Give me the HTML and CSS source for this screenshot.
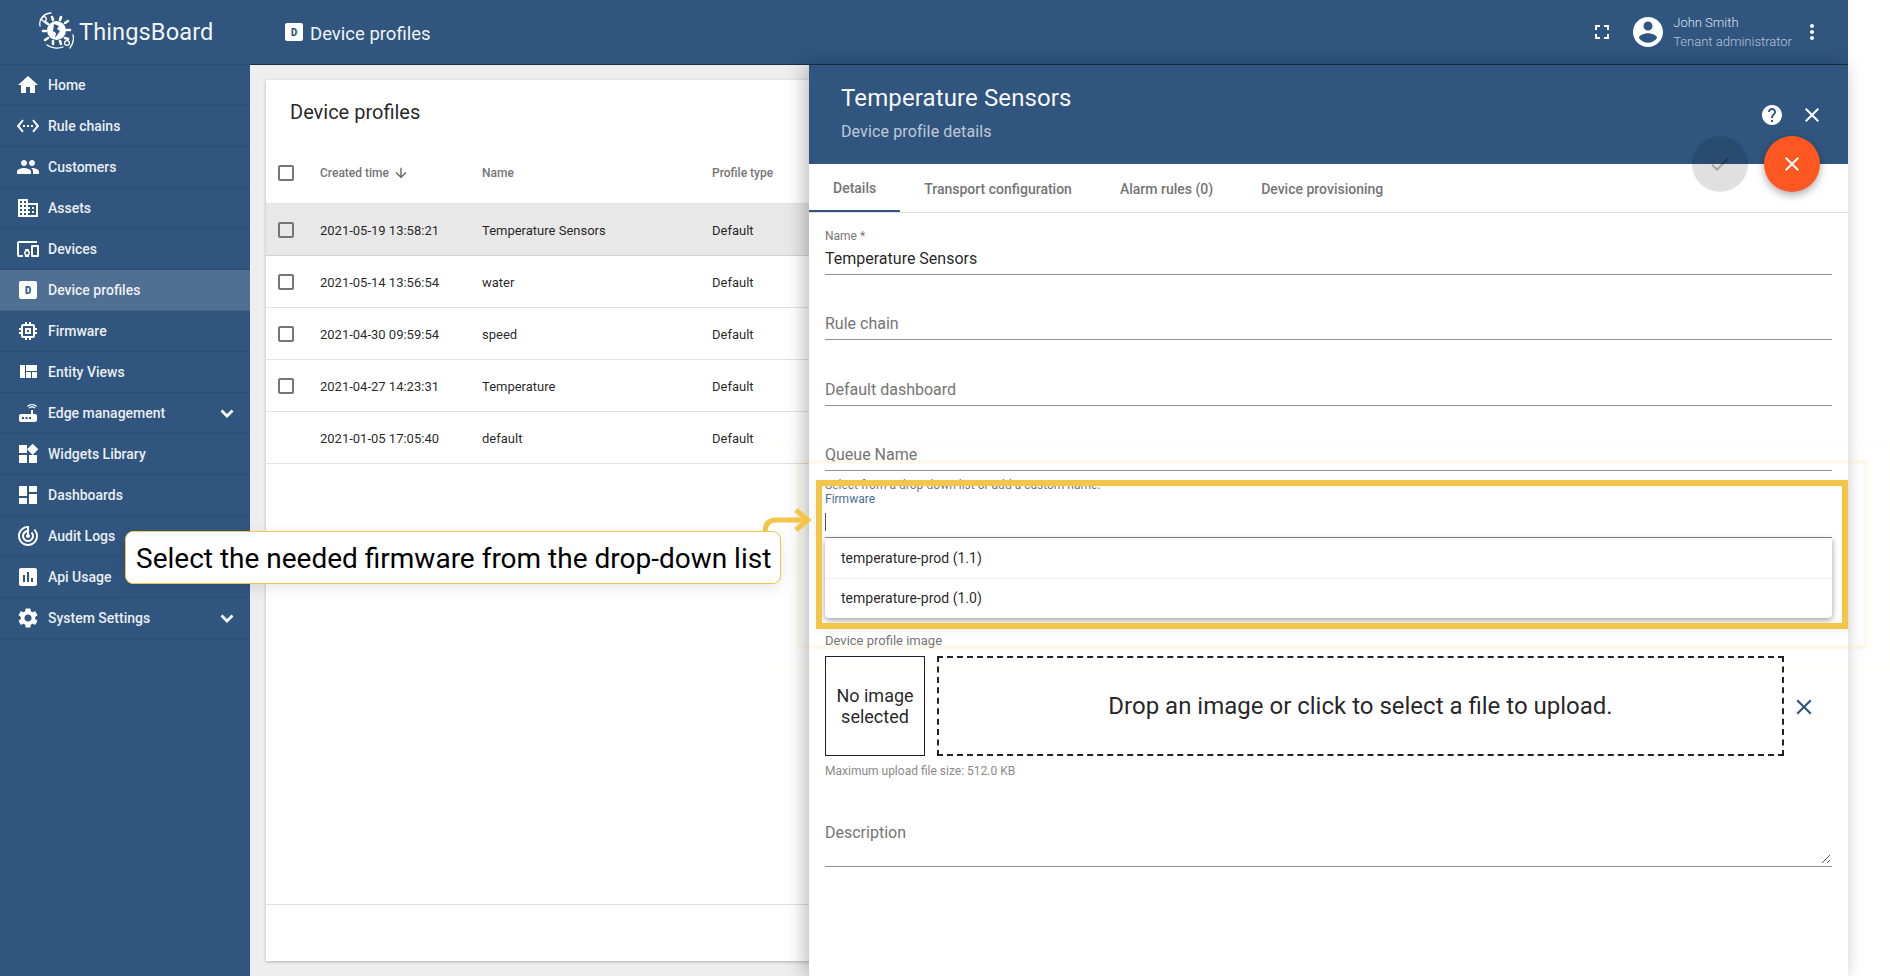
FILE: index.html
```html
<!DOCTYPE html>
<html lang="en">
<head>
    <meta charset="UTF-8">
    <title>ThingsBoard | Device profiles</title>
    <link rel="stylesheet" href="styles.css">
</head>
<body>

<div class="app">
    <aside class="sidenav">
        <div class="logo">
            <svg class="logo-mark" viewBox="0 0 36 38" width="36" height="38">
                <g fill="none" stroke="#fff" stroke-width="1.3" stroke-linecap="round">
                    <path d="M2 14C1 8 4 2 13 1"/>
                    <circle cx="6" cy="7" r="2.300"/>
                    <path d="M9 33c4 3 11 4 16 2"/>
                    <circle cx="29" cy="31" r="2.400"/>
                    <path d="M35 23c1 4 0 9-3 13"/>
                </g>
                <g fill="none" stroke="#fff" stroke-width="2.600" stroke-linecap="round">
                    <path d="M10 12l-3-2M8 19H5M10 26l-3 2M15 29v3M22 29l1 3M27 26l3 1M29 18h3M27 11l3-2M22 8l1-3M15 8l-1-3"/>
                </g>
                <circle cx="18.500" cy="18.500" r="9.500" fill="#fff"/>
                <path d="M16 12l5 2-2 3 3 2-5 7 1-5-3-2z" fill="#305680"/>
            </svg>
            <span class="logo-text">ThingsBoard</span>
        </div>
        <nav class="menu">
            <a class="menu-item"><svg viewBox="0 0 24 24"><path d="M10 20v-6h4v6h5v-8h3L12 3 2 12h3v8z"/></svg>Home</a>
            <a class="menu-item"><svg viewBox="0 0 24 24"><path d="M7.770 6.760L6.230 5.480.82 12l5.410 6.520 1.540-1.280L3.420 12l4.350-5.240zM7 13h2v-2H7v2zm10-2h-2v2h2v-2zm-6 2h2v-2h-2v2zm6.770-7.520l-1.540 1.280L20.580 12l-4.350 5.240 1.540 1.280L23.180 12l-5.410-6.520z"/></svg>Rule chains</a>
            <a class="menu-item"><svg viewBox="0 0 24 24"><path d="M16 11c1.660 0 2.990-1.340 2.990-3S17.660 5 16 5c-1.660 0-3 1.340-3 3s1.340 3 3 3zm-8 0c1.660 0 2.990-1.340 2.990-3S9.660 5 8 5C6.340 5 5 6.340 5 8s1.340 3 3 3zm0 2c-2.330 0-7 1.170-7 3.500V19h14v-2.500c0-2.330-4.670-3.500-7-3.500zm8 0c-.29 0-.62.02-.97.05 1.160.84 1.970 1.970 1.970 3.450V19h6v-2.500c0-2.330-4.670-3.500-7-3.500z"/></svg>Customers</a>
            <a class="menu-item"><svg viewBox="0 0 24 24"><path d="M12 7V3H2v18h20V7H12zM6 19H4v-2h2v2zm0-4H4v-2h2v2zm0-4H4V9h2v2zm0-4H4V5h2v2zm4 12H8v-2h2v2zm0-4H8v-2h2v2zm0-4H8V9h2v2zm0-4H8V5h2v2zm10 12h-8v-2h2v-2h-2v-2h2v-2h-2V9h8v10zm-2-8h-2v2h2v-2zm0 4h-2v2h2v-2z"/></svg>Assets</a>
            <a class="menu-item"><svg viewBox="0 0 24 24"><path d="M3 6h18V4H3c-1.100 0-2 .9-2 2v12c0 1.100.9 2 2 2h4v-2H3V6zm10 6H9v1.780c-.61.55-1 1.330-1 2.220s.39 1.670 1 2.220V20h4v-1.780c.61-.55 1-1.340 1-2.220s-.39-1.670-1-2.220V12zm-2 5.500c-.83 0-1.500-.67-1.500-1.500s.67-1.500 1.500-1.500 1.500.67 1.500 1.500-.67 1.500-1.500 1.500zM22 8h-6c-.5 0-1 .5-1 1v10c0 .5.5 1 1 1h6c.5 0 1-.5 1-1V9c0-.5-.5-1-1-1zm-1 10h-4v-8h4v8z"/></svg>Devices</a>
            <a class="menu-item active"><span class="d-icon">D</span>Device profiles</a>
            <a class="menu-item"><svg viewBox="0 0 24 24"><path d="M15 9H9v6h6V9zm-2 4h-2v-2h2v2zm8-2V9h-2V7c0-1.100-.9-2-2-2h-2V3h-2v2h-2V3H9v2H7c-1.100 0-2 .9-2 2v2H3v2h2v2H3v2h2v2c0 1.100.9 2 2 2h2v2h2v-2h2v2h2v-2h2c1.100 0 2-.9 2-2v-2h2v-2h-2v-2h2zm-4 6H7V7h10v10z"/></svg>Firmware</a>
            <a class="menu-item"><svg viewBox="0 0 24 24"><path d="M10 18h5v-6h-5v6zm-6 0h5V5H4v13zm12 0h5v-6h-5v6zM10 5v6h11V5H10z"/></svg>Entity Views</a>
            <a class="menu-item"><svg viewBox="0 0 24 24"><path d="M20.200 5.900l.8-.8C19.600 3.700 17.800 3 16 3s-3.600.7-5 2.100l.8.8C13 4.800 14.500 4.200 16 4.200s3 .6 4.200 1.700zm-.9.8c-.9-.9-2.100-1.400-3.300-1.400s-2.400.5-3.300 1.400l.8.8c.7-.7 1.600-1 2.500-1 .9 0 1.800.3 2.500 1l.8-.8zM19 13h-2V9h-2v4H5c-1.100 0-2 .9-2 2v4c0 1.100.9 2 2 2h14c1.100 0 2-.9 2-2v-4c0-1.100-.9-2-2-2zM8 18H6v-2h2v2zm3.500 0h-2v-2h2v2zm3.500 0h-2v-2h2v2z"/></svg>Edge management<svg class="chevron" viewBox="0 0 24 24"><path d="M6.500 9.500l5.500 5.500 5.500-5.500" fill="none" stroke="#fff" stroke-width="2.800"/></svg></a>
            <a class="menu-item"><svg viewBox="0 0 24 24"><path d="M13 13v8h8v-8h-8zM3 21h8v-8H3v8zM3 3v8h8V3H3zm13.660-1.310L11 7.340 16.660 13l5.660-5.660-5.660-5.650z"/></svg>Widgets Library</a>
            <a class="menu-item"><svg viewBox="0 0 24 24"><path d="M3 13h8V3H3v10zm0 8h8v-6H3v6zm10 0h8V11h-8v10zm0-18v6h8V3h-8z"/></svg>Dashboards</a>
            <a class="menu-item"><svg viewBox="0 0 24 24"><path d="M19.070 4.930l-1.410 1.410C19.100 7.790 20 9.790 20 12c0 4.420-3.580 8-8 8s-8-3.580-8-8c0-4.080 3.050-7.440 7-7.930v2.020C8.160 6.570 6 9.030 6 12c0 3.310 2.690 6 6 6s6-2.690 6-6c0-1.660-.67-3.160-1.760-4.240l-1.410 1.410C15.550 9.900 16 10.900 16 12c0 2.210-1.790 4-4 4s-4-1.790-4-4c0-1.860 1.280-3.410 3-3.860v2.140c-.6.35-1 .98-1 1.720 0 1.100.9 2 2 2s2-.9 2-2c0-.74-.4-1.380-1-1.720V2h-1C6.480 2 2 6.480 2 12s4.480 10 10 10 10-4.480 10-10c0-2.760-1.120-5.260-2.930-7.070z"/></svg>Audit Logs</a>
            <a class="menu-item"><svg viewBox="0 0 24 24"><path d="M19 3H5c-1.100 0-2 .9-2 2v14c0 1.100.9 2 2 2h14c1.100 0 2-.9 2-2V5c0-1.100-.9-2-2-2zM9 17H7v-7h2v7zm4 0h-2V7h2v10zm4 0h-2v-4h2v4z"/></svg>Api Usage</a>
            <a class="menu-item"><svg viewBox="0 0 24 24"><path d="M19.140 12.940c.04-.3.06-.61.06-.94 0-.32-.02-.64-.07-.94l2.030-1.580c.18-.14.23-.41.12-.61l-1.920-3.320c-.12-.22-.37-.29-.59-.22l-2.390.96c-.5-.38-1.030-.7-1.620-.94l-.36-2.540c-.04-.24-.24-.41-.48-.41h-3.840c-.24 0-.43.17-.47.41l-.36 2.540c-.59.24-1.130.57-1.620.94l-2.390-.96c-.22-.08-.47 0-.59.22L2.740 8.870c-.12.21-.08.47.12.61l2.030 1.580c-.05.3-.09.63-.09.94s.02.64.07.94l-2.030 1.580c-.18.14-.23.41-.12.61l1.920 3.320c.12.22.37.29.59.22l2.390-.96c.5.38 1.030.7 1.620.94l.36 2.540c.05.24.24.41.48.41h3.840c.24 0 .44-.17.47-.41l.36-2.540c.59-.24 1.130-.56 1.620-.94l2.390.96c.22.08.47 0 .59-.22l1.920-3.320c.12-.22.07-.47-.12-.61l-2.010-1.580zM12 15.600c-1.980 0-3.600-1.620-3.600-3.600s1.620-3.600 3.600-3.600 3.600 1.620 3.600 3.600-1.620 3.600-3.600 3.600z"/></svg>System Settings<svg class="chevron" viewBox="0 0 24 24"><path d="M6.500 9.500l5.500 5.500 5.500-5.500" fill="none" stroke="#fff" stroke-width="2.800"/></svg></a>
        </nav>
    </aside>

    <div class="content">
        <header class="toolbar">
            <span class="d-icon">D</span>
            <span class="toolbar-title">Device profiles</span>
            <svg class="fullscreen" viewBox="0 0 24 24"><path d="M7 14H5v5h5v-2H7v-3zm-2-4h2V7h3V5H5v5zm12 7h-3v2h5v-5h-2v3zM14 5v2h3v3h2V5h-5z"/></svg>
            <svg class="avatar" viewBox="2 2 20 20"><path d="M12 2C6.480 2 2 6.480 2 12s4.480 10 10 10 10-4.480 10-10S17.520 2 12 2zm0 3c1.660 0 3 1.340 3 3s-1.340 3-3 3-3-1.340-3-3 1.340-3 3-3zm0 14.200c-2.500 0-4.710-1.280-6-3.220.03-1.990 4-3.080 6-3.080 1.990 0 5.970 1.090 6 3.080-1.290 1.940-3.500 3.220-6 3.220z"/></svg>
            <div class="user">
                <div>John Smith</div>
                <div>Tenant administrator</div>
            </div>
            <svg class="more" viewBox="0 0 24 24"><path d="M12 8c1.100 0 2-.9 2-2s-.9-2-2-2-2 .9-2 2 .9 2 2 2zm0 2c-1.100 0-2 .9-2 2s.9 2 2 2 2-.9 2-2-.9-2-2-2zm0 6c-1.100 0-2 .9-2 2s.9 2 2 2 2-.9 2-2-.9-2-2-2z"/></svg>
        </header>

        <main class="main">
            <section class="card">
                <h2 class="card-title">Device profiles</h2>
                <div class="row head">
                    <span class="check"></span>
                    <span class="sort">Created time <svg viewBox="0 0 24 24"><path d="M20 12l-1.410-1.410L13 16.170V4h-2v12.170l-5.580-5.590L4 12l8 8 8-8z"/></svg></span>
                    <span>Name</span>
                    <span>Profile type</span>
                </div>
                <div class="row selected"><span class="check"></span><span>2021-05-19 13:58:21</span><span>Temperature Sensors</span><span>Default</span></div>
                <div class="row"><span class="check"></span><span>2021-05-14 13:56:54</span><span>water</span><span>Default</span></div>
                <div class="row"><span class="check"></span><span>2021-04-30 09:59:54</span><span>speed</span><span>Default</span></div>
                <div class="row"><span class="check"></span><span>2021-04-27 14:23:31</span><span>Temperature</span><span>Default</span></div>
                <div class="row"><span></span><span>2021-01-05 17:05:40</span><span>default</span><span>Default</span></div>
                <div class="card-footer"></div>
            </section>
        </main>

        <section class="details">
            <div class="details-head">
                <div class="details-title">Temperature Sensors</div>
                <div class="details-sub">Device profile details</div>
                <svg class="head-help" viewBox="0 0 24 24"><path d="M12 2C6.480 2 2 6.480 2 12s4.480 10 10 10 10-4.480 10-10S17.520 2 12 2zm1 17h-2v-2h2v2zm2.070-7.750l-.9.92C13.450 12.900 13 13.500 13 15h-2v-.5c0-1.100.45-2.100 1.170-2.830l1.240-1.260c.37-.36.59-.86.59-1.410 0-1.100-.9-2-2-2s-2 .9-2 2H8c0-2.210 1.790-4 4-4s4 1.790 4 4c0 .88-.36 1.680-.93 2.250z"/></svg>
                <svg class="head-close" viewBox="0 0 24 24"><path d="M19 6.410L17.590 5 12 10.590 6.410 5 5 6.410 10.590 12 5 17.590 6.410 19 12 13.410 17.590 19 19 17.590 13.410 12z"/></svg>
                <span class="fab fab-off"><svg viewBox="0 0 24 24"><path d="M9 16.170L4.830 12l-1.420 1.410L9 19 21 7l-1.410-1.410z"/></svg></span>
                <span class="fab fab-cancel"><svg viewBox="0 0 24 24"><path d="M19 6.410L17.590 5 12 10.590 6.410 5 5 6.410 10.590 12 5 17.590 6.410 19 12 13.410 17.590 19 19 17.590 13.410 12z"/></svg></span>
            </div>
            <div class="tabs">
                <span class="tab active">Details</span>
                <span class="tab">Transport configuration</span>
                <span class="tab">Alarm rules (0)</span>
                <span class="tab">Device provisioning</span>
            </div>
            <div class="form">
                <div class="field field-name">
                    <label>Name *</label>
                    <div class="value">Temperature Sensors</div>
                </div>
                <div class="field"><div class="placeholder">Rule chain</div></div>
                <div class="field"><div class="placeholder">Default dashboard</div></div>
                <div class="field"><div class="placeholder">Queue Name</div></div>
                <div class="hint">Select from a drop-down list or add a custom name.</div>
                <div class="field field-firmware">
                    <label>Firmware</label>
                    <span class="caret"></span>
                    <div class="dropdown">
                        <div class="option">temperature-prod (1.1)</div>
                        <div class="option">temperature-prod (1.0)</div>
                    </div>
                </div>
                <div class="image-label">Device profile image</div>
                <div class="image-row">
                    <div class="image-box">No image selected</div>
                    <div class="dropzone">Drop an image or click to select a file to upload.</div>
                    <svg class="image-clear" viewBox="0 0 24 24"><path d="M19 6.410L17.590 5 12 10.590 6.410 5 5 6.410 10.590 12 5 17.590 6.410 19 12 13.410 17.590 19 19 17.590 13.410 12z"/></svg>
                </div>
                <div class="image-hint">Maximum upload file size: 512.0 KB</div>
                <div class="field field-desc">
                    <div class="placeholder">Description</div>
                    <svg class="resize" viewBox="0 0 10 10" width="10" height="10"><path d="M1 9l8-8M6 9l3-3" stroke="#555" fill="none"/></svg>
                </div>
            </div>
        </section>
    </div>

    <!-- tutorial annotation -->
    <div class="halo halo-far"></div>
    <div class="halo halo-near"></div>
    <div class="highlight"></div>
    <svg class="arrow" viewBox="0 0 52 26" width="52" height="26">
        <path d="M2 24c0-8 4-12 11-12h33M33 2l12 10-12 10" fill="none" stroke="#f3c64b" stroke-width="5"/>
    </svg>
    <div class="callout">Select the needed firmware from the drop-down list</div>
</div>

</body>
</html>
```

FILE: styles.css
```css
* {
    box-sizing: border-box;
}
body {
    margin: 0;
    background: #fff;
    font-family: Roboto, "Liberation Sans", sans-serif;
    color: rgba(0, 0, 0, 0.87);
    overflow: hidden;
}
.app {
    display: flex;
    width: 1848px;
    height: 976px;
}

/* sidebar */
.sidenav {
    width: 250px;
    flex: none;
    background: #305680;
    color: #fff;
}
.logo {
    display: flex;
    align-items: center;
    height: 64px;
    padding-left: 38px;
    border-bottom: 1px solid rgba(0, 0, 0, 0.1);
    box-sizing: content-box;
}
.logo-mark {
    flex: none;
    margin-top: -2px;
}
.logo-text {
    margin-left: 5px;
    margin-top: -1px;
    font-size: 23.600px;
    letter-spacing: 0.1px;
    color: rgba(255, 255, 255, 0.95);
}
.menu-item {
    display: flex;
    align-items: center;
    height: 41px;
    padding-left: 16px;
    font-size: 14px;
    font-weight: 500;
    color: rgba(255, 255, 255, 0.92);
    border-bottom: 1px solid rgba(0, 0, 0, 0.1);
}
.menu-item > svg:first-child {
    width: 24px;
    height: 24px;
    margin-right: 8px;
    fill: #fff;
}
.menu-item.active {
    background: #4f6f93;
}
.menu-item .d-icon {
    margin: 0 11px 0 3px;
}
.chevron {
    width: 24px;
    height: 24px;
    margin-left: auto;
    margin-right: 11px;
}
.d-icon {
    display: inline-flex;
    align-items: center;
    justify-content: center;
    width: 18px;
    height: 18px;
    flex: none;
    border-radius: 2px;
    background: #fff;
    color: #305680;
    font-family: "DejaVu Sans Mono", monospace;
    font-size: 11px;
    font-weight: 700;
}

/* toolbar */
.content {
    position: relative;
    flex: 1;
    display: flex;
    flex-direction: column;
    min-width: 0;
}
.toolbar {
    display: flex;
    align-items: center;
    height: 65px;
    flex: none;
    padding: 0 24px 0 34px;
    background: #305680;
    color: #fff;
    border-bottom: 1px solid rgba(0, 0, 0, 0.45);
    border-left: 1px solid rgba(0, 0, 0, 0.06);
}
.toolbar-title {
    margin-left: 7px;
    margin-top: 3px;
    font-size: 18.500px;
    color: rgba(255, 255, 255, 0.95);
}
.fullscreen {
    width: 24px;
    height: 24px;
    margin-left: auto;
    fill: #fff;
}
.avatar {
    width: 30px;
    height: 30px;
    margin-left: 19px;
    fill: #fff;
}
.user {
    margin-left: 10px;
    font-size: 13px;
    font-weight: 300;
    line-height: 19px;
    color: rgba(255, 255, 255, 0.85);
}
.user div + div {
    color: rgba(255, 255, 255, 0.65);
}
.more {
    width: 24px;
    height: 24px;
    margin-left: 8px;
    fill: #fff;
}

/* list behind the panel */
.main {
    flex: 1;
    padding: 15px 16px;
    background: #eee;
    min-height: 0;
}
.card {
    display: flex;
    flex-direction: column;
    height: 100%;
    background: #fff;
    box-shadow: 0 1px 3px rgba(0, 0, 0, 0.25);
}
.card-title {
    height: 63px;
    margin: 0;
    padding: 20px 24px 0;
    font-size: 20px;
    font-weight: 400;
}
.row {
    display: grid;
    grid-template-columns: 54px 162px 230px 1fr;
    align-items: center;
    height: 52px;
    padding-top: 1px;
    font-size: 13px;
    border-bottom: 1px solid #e3e3e3;
}
.row.head {
    height: 61px;
    padding-top: 0;
    font-size: 12px;
    font-weight: 500;
    color: #757575;
}
.row.selected {
    background: #e8e8e8;
    border-bottom-color: #d4d4d4;
}
.check {
    width: 16px;
    height: 16px;
    margin-left: 12px;
    border: 2px solid #757575;
    border-radius: 2px;
}
.sort {
    display: flex;
    align-items: center;
    gap: 4px;
}
.sort svg {
    width: 16px;
    height: 16px;
    fill: #616161;
}
.card-footer {
    margin-top: auto;
    height: 57px;
    border-top: 1px solid #e0e0e0;
}

/* details drawer, it slides over the list */
.details {
    position: absolute;
    top: 65px;
    right: 0;
    bottom: 0;
    width: 1039px;
    background: #fff;
    box-shadow: -4px 0 18px rgba(0, 0, 0, 0.28);
}
.details-head {
    position: relative;
    height: 99px;
    padding: 18px 32px 0;
    background: #305680;
    color: #fff;
}
.details-title {
    font-size: 24px;
    line-height: 30px;
    letter-spacing: 0.12px;
    color: rgba(255, 255, 255, 0.97);
}
.details-sub {
    margin-top: 9px;
    font-size: 16px;
    line-height: 20px;
    letter-spacing: 0.12px;
    color: rgba(255, 255, 255, 0.7);
}
.head-help,
.head-close {
    position: absolute;
    top: 38px;
    width: 24px;
    height: 24px;
    fill: #fff;
}
.head-help {
    right: 64px;
}
.head-close {
    right: 24px;
}
.fab {
    position: absolute;
    top: 71px;
    display: flex;
    align-items: center;
    justify-content: center;
    width: 56px;
    height: 56px;
    border-radius: 50%;
    z-index: 2;
}
.fab svg {
    width: 24px;
    height: 24px;
}
.fab-off {
    right: 100px;
    background: rgba(0, 0, 0, 0.12);
}
.fab-off svg {
    fill: rgba(0, 0, 0, 0.26);
}
.fab-cancel {
    right: 28px;
    background: #ff5722;
    box-shadow: 0 3px 8px rgba(0, 0, 0, 0.35);
}
.fab-cancel svg {
    fill: #fff;
}
.tabs {
    display: flex;
    height: 49px;
    border-bottom: 1px solid #e0e0e0;
}
.tab {
    display: flex;
    align-items: center;
    padding: 1px 24px 0;
    height: 48px;
    font-size: 14px;
    font-weight: 500;
    color: #757575;
}
.tab.active {
    border-bottom: 2px solid #305680;
}
.form {
    padding: 0 16px;
}
.field {
    position: relative;
    display: flex;
    flex-direction: column;
    justify-content: flex-end;
    height: 65.300px;
    padding-bottom: 3px;
    border-bottom: 1px solid #8f8f8f;
}
.field label {
    font-size: 12px;
    line-height: 14px;
    color: #757575;
}
.field-name {
    height: 62px;
}
.value {
    margin-top: 6px;
    margin-bottom: 2.500px;
    font-size: 16px;
    line-height: 20px;
}
.placeholder {
    margin-bottom: 2px;
    font-size: 16px;
    line-height: 20px;
    color: #757575;
}
.hint {
    margin-top: 7px;
    height: 14px;
    font-size: 12px;
    line-height: 14px;
    color: #757575;
}
.field-firmware {
    height: 46px;
    justify-content: flex-start;
    padding-top: 0;
}
.field-firmware label {
    color: #4a6d94;
}
.caret {
    width: 1px;
    height: 18px;
    margin-top: 7px;
    background: #305680;
}
.dropdown {
    position: absolute;
    top: 46px;
    left: 0;
    right: 0;
    z-index: 1;
    background: #fff;
    border-radius: 0 0 4px 4px;
    box-shadow: 0 2px 6px rgba(0, 0, 0, 0.4);
}
.option {
    display: flex;
    align-items: center;
    height: 40px;
    padding-left: 16px;
    font-size: 14px;
}
.option + .option {
    border-top: 1px solid #eee;
}
.image-label {
    margin-top: 96px;
    font-size: 13px;
    line-height: 14px;
    color: #757575;
}
.image-row {
    display: flex;
    align-items: center;
    margin-top: 8px;
}
.image-box {
    display: flex;
    align-items: center;
    width: 100px;
    height: 100px;
    padding: 0 8px;
    flex: none;
    border: 1px solid #222;
    text-align: center;
    font-size: 18px;
    line-height: 21px;
}
.dropzone {
    display: flex;
    align-items: center;
    justify-content: center;
    width: 847px;
    height: 100px;
    margin-left: 12px;
    border: 2px dashed #222;
    font-size: 24px;
}
.image-clear {
    width: 26px;
    height: 26px;
    margin: 2px 0 0 7px;
    fill: #305680;
}
.image-hint {
    margin-top: 8px;
    font-size: 12px;
    line-height: 14px;
    color: #8a8a8a;
}
.field-desc {
    height: 89px;
    padding-bottom: 21px;
}
.resize {
    position: absolute;
    right: 1px;
    bottom: 2px;
}

/* annotation drawn on top of the screen */
.halo {
    position: absolute;
    z-index: 3;
    pointer-events: none;
}
.halo-far {
    left: 775px;
    top: 440px;
    width: 1114px;
    height: 230px;
    border: 2px solid rgba(243, 198, 75, 0.025);
}
.halo-near {
    left: 797px;
    top: 460px;
    width: 1071px;
    height: 189px;
    border: 4px solid rgba(243, 198, 75, 0.1);
}
.highlight {
    position: absolute;
    z-index: 4;
    left: 816px;
    top: 480px;
    width: 1032px;
    height: 149px;
    border: 6px solid #f3c64b;
    box-shadow: 0 2px 10px rgba(0, 0, 0, 0.06);
}
.arrow {
    position: absolute;
    z-index: 5;
    left: 763px;
    top: 508px;
}
.callout {
    position: absolute;
    z-index: 6;
    left: 125px;
    top: 531px;
    width: 656px;
    height: 53px;
    padding-left: 10px;
    background: #fff;
    border: 1px solid #f3c64b;
    border-radius: 8px;
    box-shadow: 0 4px 14px rgba(0, 0, 0, 0.1);
    font-size: 28px;
    line-height: 53px;
    color: #000;
    white-space: nowrap;
}
```
